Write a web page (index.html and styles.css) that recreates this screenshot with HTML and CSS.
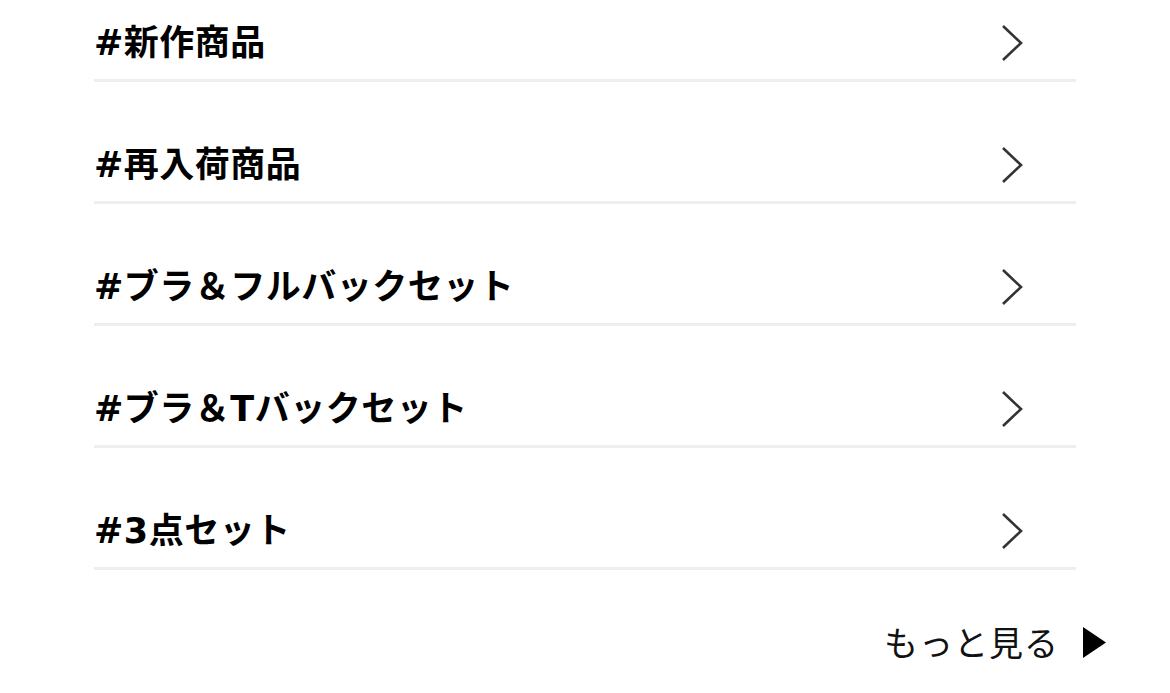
FILE: index.html
```html
<!DOCTYPE html>
<html lang="ja">
<head>
<meta charset="utf-8">
<title>タグ</title>
<link rel="stylesheet" href="styles.css">
</head>
<body>
<div class="page">
  <ul class="tag-list">
    <li class="tag-item"><span class="tag-name">#新作商品</span><svg class="chev" viewBox="0 0 22 38" width="22" height="38"><polyline points="2,2 20,19 2,36" fill="none" stroke="#333" stroke-width="2.6"/></svg></li>
    <li class="tag-item"><span class="tag-name">#再入荷商品</span><svg class="chev" viewBox="0 0 22 38" width="22" height="38"><polyline points="2,2 20,19 2,36" fill="none" stroke="#333" stroke-width="2.6"/></svg></li>
    <li class="tag-item"><span class="tag-name">#ブラ＆フルバックセット</span><svg class="chev" viewBox="0 0 22 38" width="22" height="38"><polyline points="2,2 20,19 2,36" fill="none" stroke="#333" stroke-width="2.6"/></svg></li>
    <li class="tag-item"><span class="tag-name">#ブラ＆Tバックセット</span><svg class="chev" viewBox="0 0 22 38" width="22" height="38"><polyline points="2,2 20,19 2,36" fill="none" stroke="#333" stroke-width="2.6"/></svg></li>
    <li class="tag-item"><span class="tag-name">#3点セット</span><svg class="chev" viewBox="0 0 22 38" width="22" height="38"><polyline points="2,2 20,19 2,36" fill="none" stroke="#333" stroke-width="2.6"/></svg></li>
  </ul>
  <div class="more-row">
    <a class="more" href="#">もっと見る<svg class="tri" viewBox="0 0 23 31" width="23" height="31"><polygon points="0,0 23,15.5 0,31" fill="#000"/></svg></a>
  </div>
</div>
</body>
</html>
```
FILE: styles.css
```css
html, body {
  margin: 0;
  padding: 0;
  background: #fff;
}
body {
  font-family: "Noto Sans CJK JP", "Noto Sans", sans-serif;
  color: #000;
  overflow: hidden;
}
.page {
  width: 1170px;
}
.tag-list {
  list-style: none;
  margin: -40px 0 0 94px;
  padding: 0;
  width: 982px;
}
.tag-item {
  display: flex;
  align-items: center;
  justify-content: space-between;
  box-sizing: border-box;
  height: 122px;
  padding: 44px 53px 0 0;
  border-bottom: 3px solid #eeeeee;
}
.tag-name {
  font-family: "DejaVu Sans", "Noto Sans CJK JP", sans-serif;
  font-size: 35px;
  font-weight: 700;
  letter-spacing: 0.5px;
  line-height: 1;
  padding-top: 4px;
}
.chev {
  display: block;
  margin-top: 3px;
}
.more-row {
  display: flex;
  justify-content: flex-end;
  padding: 55px 64px 0 0;
}
.more {
  display: flex;
  align-items: center;
  gap: 24px;
  font-size: 34px;
  font-weight: 400;
  line-height: 1;
  color: #111;
  text-decoration: none;
  letter-spacing: 1px;
}
.tri {
  display: block;
}
```
